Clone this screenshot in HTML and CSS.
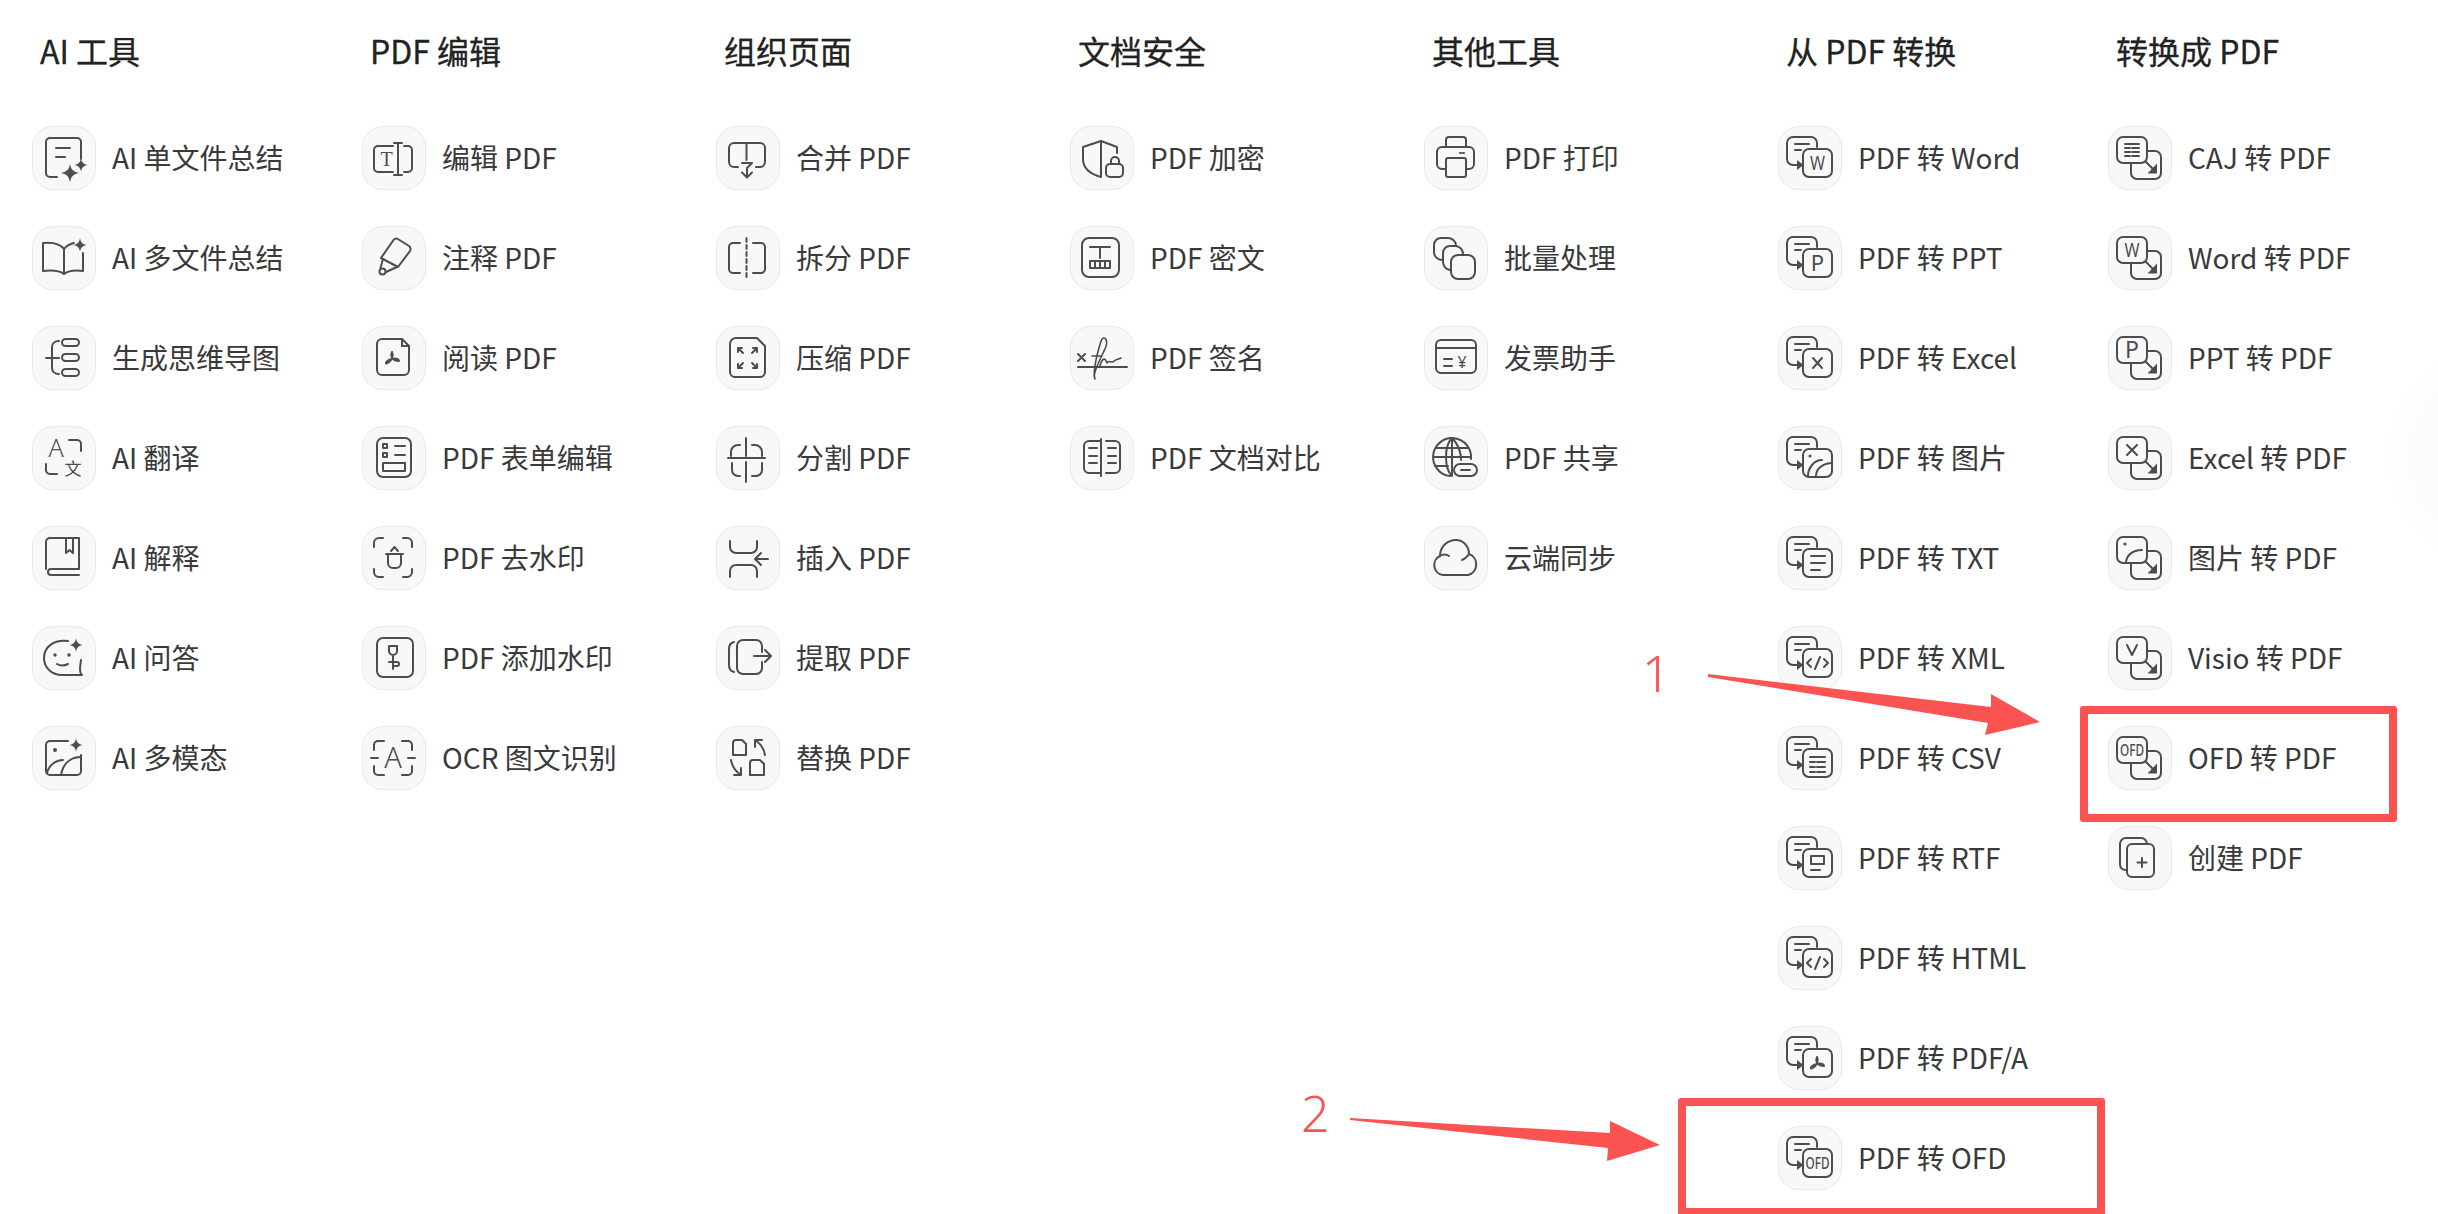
FILE: index.html
```html
<!DOCTYPE html>
<html lang="zh-CN">
<head>
    <meta charset="UTF-8">
    <title>PDF 工具</title>
    <link rel="stylesheet" href="styles.css">
</head>
<body>

<!-- 共用图标部件 -->
<svg class="defs" width="0" height="0">
    <defs>
        <g id="spark-lg"><path class="solid" d="M38 38Q39 46 47 47Q39 48 38 56Q37 48 29 47Q37 46 38 38Z"/></g>
        <g id="spark-sm"><path class="solid" d="M0-6.5Q.8-.8 6.5 0Q.8.8 0 6.5Q-.8.8-6.5 0Q-.8-.8 0-6.5Z"/></g>
        <g id="acrobat"><path d="M0 0Q-1.500-3 0-6Q1.500-3 0 0M0 0Q-2 5-6 5.500Q-6.500 3.500-2 1.500M0 0Q3 3 7 3Q6.500 .5 2 .5"/></g>
        <g id="from-pdf">
            <path d="M39 21V17a6 6 0 0 0-6-6H15a6 6 0 0 0-6 6V33a6 6 0 0 0 6 6H19"/>
            <path d="M17 18H31M17 24H23"/>
            <path class="solid" d="M19 34L25.500 39L19 44Z"/>
            <rect x="25" y="23" width="29" height="28" rx="6"/>
        </g>
        <g id="to-pdf">
            <rect x="9" y="11" width="30" height="26" rx="6"/>
            <path d="M39 25H47a6 6 0 0 1 6 6V47a6 6 0 0 1-6 6H29a6 6 0 0 1-6-6V37"/>
            <path d="M38 36L46 44"/>
            <path class="solid" d="M49 37.500V47.500H39.500Z"/>
        </g>
    </defs>
</svg>

<div class="page">

    <section class="col">
        <h2>AI 工具</h2>
        <ul class="tool-list">
            <li class="tool"><span class="tool-icon"><svg viewBox="0 0 64 64"><path d="M49 33V16a4 4 0 0 0-4-4H18a4 4 0 0 0-4 4V47a4 4 0 0 0 4 4H25"/><path d="M24 22H38M24 31H33"/><use href="#spark-lg"/><use href="#spark-sm" x="49" y="39"/></svg></span>AI 单文件总结</li>
            <li class="tool"><span class="tool-icon"><svg viewBox="0 0 64 64"><path d="M32 23C28 18 20 16 11 17V45C20 44 28 45 32 48C36 45 44 44 51 45V27"/><path d="M32 23V48M32 23C35 19 38 18 42 17"/><use href="#spark-sm" x="48" y="19"/></svg></span>AI 多文件总结</li>
            <li class="tool"><span class="tool-icon"><svg viewBox="0 0 64 64"><path d="M27 15C22 15 20 18 20 21V42C20 45 22 48 27 48M14 32H27"/><rect x="30" y="13" width="17" height="7" rx="3.500"/><rect x="30" y="28" width="17" height="7" rx="3.500"/><rect x="30" y="43" width="17" height="7" rx="3.500"/></svg></span>生成思维导图</li>
            <li class="tool"><span class="tool-icon"><svg viewBox="0 0 64 64"><text class="glyph thin" x="24" y="31" font-size="25" text-anchor="middle">A</text><text class="glyph cjk" x="41" y="49" font-size="17" text-anchor="middle">文</text><path d="M37 14H45a4 4 0 0 1 4 4V25M14 38V44a4 4 0 0 0 4 4H25"/></svg></span>AI 翻译</li>
            <li class="tool"><span class="tool-icon"><svg viewBox="0 0 64 64"><path d="M14 43V16a4 4 0 0 1 4-4H47V43H19a3 3 0 0 0 0 6H47"/><path d="M34 12V27L37.500 24L41 27V12"/></svg></span>AI 解释</li>
            <li class="tool"><span class="tool-icon"><svg viewBox="0 0 64 64"><path d="M36 15C22 13 12 21 12 32C12 42 20 49 30 49H50C47 46 48 42 49 34"/><circle class="solid" cx="23" cy="29" r="1.700"/><circle class="solid" cx="37" cy="29" r="1.700"/><path d="M25 38Q30 41 36 38"/><use href="#spark-sm" x="44" y="19"/></svg></span>AI 问答</li>
            <li class="tool"><span class="tool-icon"><svg viewBox="0 0 64 64"><path d="M36 15H18a4 4 0 0 0-4 4V45a4 4 0 0 0 4 4H45a4 4 0 0 0 4-4V29"/><circle class="solid" cx="23" cy="24" r="2"/><path d="M15 47C17 39 24 34 31 34M49 31C38 31 31 38 29 49"/><use href="#spark-sm" x="44" y="19"/></svg></span>AI 多模态</li>
        </ul>
    </section>

    <section class="col">
        <h2>PDF 编辑</h2>
        <ul class="tool-list">
            <li class="tool"><span class="tool-icon"><svg viewBox="0 0 64 64"><path d="M31 20H16a4 4 0 0 0-4 4V42a4 4 0 0 0 4 4H31M42 20H46a4 4 0 0 1 4 4V42a4 4 0 0 1-4 4H42M32 17H40M36 17V49M32 49H40"/><text class="glyph serif" x="24.500" y="40" font-size="20" text-anchor="middle">T</text></svg></span>编辑 PDF</li>
            <li class="tool"><span class="tool-icon"><svg viewBox="0 0 64 64"><path d="M35 12.500L47 20Q49.500 22 48 25L36 41L19 32L31.500 14Q33 12 35 12.500Z"/><path d="M21 33L18.500 42M35 41L24 46"/><circle cx="20.500" cy="45.500" r="3"/></svg></span>注释 PDF</li>
            <li class="tool"><span class="tool-icon"><svg viewBox="0 0 64 64"><path d="M40 13H20a5 5 0 0 0-5 5V44a5 5 0 0 0 5 5H42a5 5 0 0 0 5-5V20Z"/><path d="M40 13V20H47"/><use href="#acrobat" x="30" y="32"/></svg></span>阅读 PDF</li>
            <li class="tool"><span class="tool-icon"><svg viewBox="0 0 64 64"><rect x="15" y="12" width="34" height="39" rx="6"/><rect x="21" y="18" width="4" height="4"/><rect x="21" y="27" width="4" height="4"/><path d="M33 20H43M33 29H43"/><rect x="21" y="37" width="22" height="8"/></svg></span>PDF 表单编辑</li>
            <li class="tool"><span class="tool-icon"><svg viewBox="0 0 64 64"><path d="M12 21V17a5 5 0 0 1 5-5H21M41 12H45a5 5 0 0 1 5 5V21M50 43V46a5 5 0 0 1-5 5H41M21 51H17a5 5 0 0 1-5-5V43"/><path d="M24 28H41M26 28V37a5 5 0 0 0 5 5H34a5 5 0 0 0 5-5V28M29 25L32.500 21L36 25"/></svg></span>PDF 去水印</li>
            <li class="tool"><span class="tool-icon"><svg viewBox="0 0 64 64"><rect x="15" y="12" width="36" height="39" rx="6"/><path d="M27 20H35V25a4 4 0 0 1-8 0ZM31 29V43M31 36H35a2 2 0 0 1 0 4H31M31 36H27"/></svg></span>PDF 添加水印</li>
            <li class="tool"><span class="tool-icon"><svg viewBox="0 0 64 64"><path d="M12 24V19a4 4 0 0 1 4-4H22M40 15H46a4 4 0 0 1 4 4V24M50 40V45a4 4 0 0 1-4 4H40M22 49H16a4 4 0 0 1-4-4V40"/><path d="M9 32H16M46 32H53"/><text class="glyph thin" x="31" y="42" font-size="29" text-anchor="middle">A</text></svg></span>OCR 图文识别</li>
        </ul>
    </section>

    <section class="col">
        <h2>组织页面</h2>
        <ul class="tool-list">
            <li class="tool"><span class="tool-icon"><svg viewBox="0 0 64 64"><path d="M22 41H18a5 5 0 0 1-5-5V22a5 5 0 0 1 5-5H44a5 5 0 0 1 5 5V36a5 5 0 0 1-5 5H40M30.500 17V34M26 37H36L31 42V51M26 46.500L31 51.500L36 46.500"/></svg></span>合并 PDF</li>
            <li class="tool"><span class="tool-icon"><svg viewBox="0 0 64 64"><path d="M24 17H17a4 4 0 0 0-4 4V43a4 4 0 0 0 4 4H24M37 17H45a4 4 0 0 1 4 4V43a4 4 0 0 1-4 4H37"/><path d="M30.500 12V52" stroke-dasharray="4 3"/></svg></span>拆分 PDF</li>
            <li class="tool"><span class="tool-icon"><svg viewBox="0 0 64 64"><path d="M20 12H41L49 20V46a5 5 0 0 1-5 5H19a5 5 0 0 1-5-5V18a6 6 0 0 1 6-6Z"/><path d="M22 22H26M22 22V26M22 22L27 27M41 22H37M41 22V26M41 22L36 27M22 42H26M22 42V38M22 42L27 37M41 42H37M41 42V38M41 42L36 37"/></svg></span>压缩 PDF</li>
            <li class="tool"><span class="tool-icon"><svg viewBox="0 0 64 64"><path d="M12 32H49M30 12V30M30 36V56M15 30V26a7 7 0 0 1 7-7H24M36 19H39a7 7 0 0 1 7 7V30M16 37V44a6 6 0 0 0 6 6H24M36 50H40a6 6 0 0 0 6-6V37"/></svg></span>分割 PDF</li>
            <li class="tool"><span class="tool-icon"><svg viewBox="0 0 64 64"><path d="M14 15V21a6 6 0 0 0 6 6H35a6 6 0 0 0 6-6V15M14 51V45a6 6 0 0 1 6-6H35a6 6 0 0 1 6 6V51M52 33H39M45 27L39 33L45 39"/></svg></span>插入 PDF</li>
            <li class="tool"><span class="tool-icon"><svg viewBox="0 0 64 64"><path d="M46 26V20a6 6 0 0 0-6-6H27a6 6 0 0 0-6 6V42a6 6 0 0 0 6 6H40a6 6 0 0 0 6-6V36M18 16Q13 17 13 23V39Q13 45 18 46M38 30H55M49 24L55 30L49 36"/></svg></span>提取 PDF</li>
            <li class="tool"><span class="tool-icon"><svg viewBox="0 0 64 64"><path d="M20 14H26L30 18V29H17V17a3 3 0 0 1 3-3ZM37 34H44L48 38V49H34V37a3 3 0 0 1 3-3ZM49 29C48 23 45 18 39 14M39 14V21M39 14H46M15 34C16 40 19 45 25 49M25 49V42M25 49H18"/></svg></span>替换 PDF</li>
        </ul>
    </section>

    <section class="col">
        <h2>文档安全</h2>
        <ul class="tool-list">
            <li class="tool"><span class="tool-icon"><svg viewBox="0 0 64 64"><path d="M47 27V21L31 15L13 21V33C13 42 20 48 31 51M31 15V51"/><rect x="36" y="38" width="17" height="13" rx="4"/><path d="M41 38V35a4 4 0 0 1 8 0V38"/></svg></span>PDF 加密</li>
            <li class="tool"><span class="tool-icon"><svg viewBox="0 0 64 64"><rect x="12" y="12" width="37" height="39" rx="7"/><path d="M20 21H40M30 21V32"/><rect x="20" y="35" width="20" height="7"/><path d="M25 35V42M30 35V42M35 35V42"/></svg></span>PDF 密文</li>
            <li class="tool"><span class="tool-icon"><svg viewBox="0 0 64 64"><path d="M8 28L15 35M15 28L8 35M8 41H57"/><path class="fine" d="M25 53C22 45 28 25 31 15C34 8 40 14 34 25C30 33 25 45 24 50M22 30H32M30 40C32 32 35 31 37 37C39 33 42 38 44 35C46 33 47 34 51 32"/></svg></span>PDF 签名</li>
            <li class="tool"><span class="tool-icon"><svg viewBox="0 0 64 64"><path d="M30 15H19a5 5 0 0 0-5 5V42a5 5 0 0 0 5 5H30M31 13V50M36 15H45a5 5 0 0 1 5 5V42a5 5 0 0 1-5 5H36M19 22H27M19 30H27M19 37H27M38 22H46M38 30H46M38 37H46"/></svg></span>PDF 文档对比</li>
        </ul>
    </section>

    <section class="col">
        <h2>其他工具</h2>
        <ul class="tool-list">
            <li class="tool"><span class="tool-icon"><svg viewBox="0 0 64 64"><path d="M22 21V14a3 3 0 0 1 3-3H39a3 3 0 0 1 3 3V21M22 43H18a5 5 0 0 1-5-5V26a5 5 0 0 1 5-5H45a5 5 0 0 1 5 5V38a5 5 0 0 1-5 5H42M36 27H37M39 27H40"/><rect x="22" y="32" width="20" height="19" rx="2"/></svg></span>PDF 打印</li>
            <li class="tool"><span class="tool-icon"><svg viewBox="0 0 64 64"><rect x="27" y="29" width="24" height="24" rx="7"/><path d="M26 44a8 8 0 0 1-7-8V27a7 7 0 0 1 7-7H32a8 8 0 0 1 7 8M18 34a8 8 0 0 1-8-8V19a7 7 0 0 1 7-7H24a8 8 0 0 1 8 7"/></svg></span>批量处理</li>
            <li class="tool"><span class="tool-icon"><svg viewBox="0 0 64 64"><rect x="12" y="14" width="40" height="33" rx="5"/><path d="M12 22H52M20 33H28M20 40H28"/><text class="glyph" x="38" y="42" font-size="16" text-anchor="middle">¥</text></svg></span>发票助手</li>
            <li class="tool"><span class="tool-icon"><svg viewBox="0 0 64 64"><path d="M47 33A19 19 0 1 0 26 50M28 12C20 20 20 42 28 50M28 12C36 20 37 28 37 34M28 12V50M9 31H47M12 22H44M11 40H24"/><rect x="30" y="38" width="23" height="12" rx="6"/><path d="M37 44H46"/></svg></span>PDF 共享</li>
            <li class="tool"><span class="tool-icon"><svg viewBox="0 0 64 64"><path d="M19 49a10 10 0 0 1-3-19C16 20 24 14 32 14C40 14 45 21 45 28a11 11 0 0 1-1 21ZM16 30C19 28 22 28 25 30M45 28C43 31 41 33 38 34"/></svg></span>云端同步</li>
        </ul>
    </section>

    <section class="col">
        <h2>从 PDF 转换</h2>
        <ul class="tool-list">
            <li class="tool"><span class="tool-icon"><svg viewBox="0 0 64 64"><use href="#from-pdf"/><text class="glyph" x="39.500" y="44" font-size="19" text-anchor="middle" textLength="15" lengthAdjust="spacingAndGlyphs">W</text></svg></span>PDF 转 Word</li>
            <li class="tool"><span class="tool-icon"><svg viewBox="0 0 64 64"><use href="#from-pdf"/><text class="glyph" x="39.500" y="45" font-size="22" text-anchor="middle">P</text></svg></span>PDF 转 PPT</li>
            <li class="tool"><span class="tool-icon"><svg viewBox="0 0 64 64"><use href="#from-pdf"/><path d="M35 32L44 42M44 32L35 42"/></svg></span>PDF 转 Excel</li>
            <li class="tool"><span class="tool-icon"><svg viewBox="0 0 64 64"><use href="#from-pdf"/><circle class="solid" cx="32" cy="30" r="1.500"/><path d="M30 50C30 42 36 34 44 34M38 50C38 43 44 38 53 37"/></svg></span>PDF 转 图片</li>
            <li class="tool"><span class="tool-icon"><svg viewBox="0 0 64 64"><use href="#from-pdf"/><path d="M33 30H47M33 37H47M33 44H42"/></svg></span>PDF 转 TXT</li>
            <li class="tool"><span class="tool-icon"><svg viewBox="0 0 64 64"><use href="#from-pdf"/><path d="M33 33L29 37L33 41M46 33L50 37L46 41M42 31L37 43"/></svg></span>PDF 转 XML</li>
            <li class="tool"><span class="tool-icon"><svg viewBox="0 0 64 64"><use href="#from-pdf"/><path d="M32 31H47M32 36H37M39 36H47M32 41H37M39 41H47M32 46H37M39 46H47"/></svg></span>PDF 转 CSV</li>
            <li class="tool"><span class="tool-icon"><svg viewBox="0 0 64 64"><use href="#from-pdf"/><rect x="33" y="30" width="13" height="8"/><path d="M33 44H42"/></svg></span>PDF 转 RTF</li>
            <li class="tool"><span class="tool-icon"><svg viewBox="0 0 64 64"><use href="#from-pdf"/><path d="M33 33L29 37L33 41M46 33L50 37L46 41M42 31L37 43"/></svg></span>PDF 转 HTML</li>
            <li class="tool"><span class="tool-icon"><svg viewBox="0 0 64 64"><use href="#from-pdf"/><use href="#acrobat" x="39" y="37"/></svg></span>PDF 转 PDF/A</li>
            <li class="tool"><span class="tool-icon"><svg viewBox="0 0 64 64"><use href="#from-pdf"/><text class="glyph condensed" x="39.500" y="43" font-size="17" text-anchor="middle" textLength="24" lengthAdjust="spacingAndGlyphs">OFD</text></svg></span>PDF 转 OFD</li>
        </ul>
    </section>

    <section class="col">
        <h2>转换成 PDF</h2>
        <ul class="tool-list">
            <li class="tool"><span class="tool-icon"><svg viewBox="0 0 64 64"><use href="#to-pdf"/><path d="M17 18H31M17 22H22M24 22H31M17 26H22M24 26H31M17 30H22M24 30H31"/></svg></span>CAJ 转 PDF</li>
            <li class="tool"><span class="tool-icon"><svg viewBox="0 0 64 64"><use href="#to-pdf"/><text class="glyph" x="24" y="31" font-size="19" text-anchor="middle" textLength="15" lengthAdjust="spacingAndGlyphs">W</text></svg></span>Word 转 PDF</li>
            <li class="tool"><span class="tool-icon"><svg viewBox="0 0 64 64"><use href="#to-pdf"/><text class="glyph" x="24" y="32" font-size="23" text-anchor="middle">P</text></svg></span>PPT 转 PDF</li>
            <li class="tool"><span class="tool-icon"><svg viewBox="0 0 64 64"><use href="#to-pdf"/><path d="M19 19L29 29M29 19L19 29"/></svg></span>Excel 转 PDF</li>
            <li class="tool"><span class="tool-icon"><svg viewBox="0 0 64 64"><use href="#to-pdf"/><circle class="solid" cx="17" cy="18" r="1.600"/><path d="M18 37C18 30 24 24 34 24"/></svg></span>图片 转 PDF</li>
            <li class="tool"><span class="tool-icon"><svg viewBox="0 0 64 64"><use href="#to-pdf"/><path d="M19 19L24 29L29 19"/></svg></span>Visio 转 PDF</li>
            <li class="tool"><span class="tool-icon"><svg viewBox="0 0 64 64"><use href="#to-pdf"/><text class="glyph condensed" x="24" y="30" font-size="17" text-anchor="middle" textLength="24" lengthAdjust="spacingAndGlyphs">OFD</text></svg></span>OFD 转 PDF</li>
            <li class="tool"><span class="tool-icon"><svg viewBox="0 0 64 64"><rect x="19" y="18" width="27" height="33" rx="5"/><path d="M18 44Q12 44 12 38V18a6 6 0 0 1 6-6H33a6 6 0 0 1 6 6M34 32V41M29.500 36.500H38.500"/></svg></span>创建 PDF</li>
        </ul>
    </section>

    <!-- 截图上的标注 -->
    <div class="mark-box mark-box-one"></div>
    <div class="mark-box mark-box-two"></div>
    <span class="mark-num mark-num-one">1</span>
    <span class="mark-num mark-num-two">2</span>
    <svg class="mark-arrows" viewBox="0 0 2438 1214">
        <polygon points="1708,674 1991,707 1991,694 2040,722 1985,735 1988,723 1708,677"/>
        <polygon points="1350,1118 1610,1133 1610,1121 1660,1145 1607,1161 1608,1148 1350,1120"/>
    </svg>

    <div class="stamp">1760525950</div>
    <div class="edge-glow"></div>
</div>

</body>
</html>
```

FILE: styles.css
```css
* {
    box-sizing: border-box;
}

html, body {
    margin: 0;
    padding: 0;
    background-color: #fff;
}

body {
    font-family: "Noto Sans CJK SC", "Noto Sans", sans-serif;
    color: #333;
}

.defs {
    position: absolute;
}

.page {
    position: relative;
    display: flex;
    width: 2438px;
    height: 1214px;
    padding: 30px 0 0 32px;
    overflow: hidden;
}

.col {
    flex: 0 0 354px;
}

.col:first-child,
.col:nth-child(6) {
    flex-basis: 330px;
}

.col h2 {
    margin: 0 0 56px 8px;
    font-size: 32px;
    line-height: 40px;
    font-weight: 400;
    color: #222;
    -webkit-text-stroke: 0.3px #222;
}

.tool-list {
    display: flex;
    flex-direction: column;
    gap: 36px;
    margin: 0;
    padding: 0;
    list-style: none;
}

.tool {
    display: flex;
    align-items: flex-start;
    gap: 16px;
    height: 64px;
    font-size: 28px;
    line-height: 63px;
    white-space: nowrap;
    color: #3a3a3a;
}

.tool-icon {
    flex: 0 0 64px;
    width: 64px;
    height: 64px;
    border-radius: 21px;
    background-color: #f8f8f8;
    box-shadow: inset 0 0 0 1px #e9e9e9;
}

.tool-icon svg {
    display: block;
    width: 64px;
    height: 64px;
    fill: none;
    stroke: #4d4d4d;
    stroke-width: 2;
    stroke-linecap: round;
    stroke-linejoin: round;
}

/* use 里的克隆元素匹配不到后代选择器，所以这里不带 .tool-icon */
.solid {
    fill: #4d4d4d;
    stroke: none;
}

.fine {
    stroke-width: 1.6;
}

.glyph {
    fill: #4d4d4d;
    stroke: none;
    font-family: "Noto Sans", sans-serif;
    font-weight: 400;
}

.cjk {
    font-family: "Noto Sans CJK SC", sans-serif;
}

.serif {
    font-family: "Liberation Serif", serif;
}

.thin {
    font-weight: 300;
}

.condensed {
    font-weight: 500;
}

/* 红色标注 */
.mark-box {
    position: absolute;
    border: 8px solid #fb5252;
    border-radius: 3px;
}

.mark-box-one {
    left: 2080px;
    top: 706px;
    width: 317px;
    height: 116px;
}

.mark-box-two {
    left: 1678px;
    top: 1098px;
    width: 427px;
    height: 118px;
}

.mark-num {
    position: absolute;
    font-family: "Noto Sans", sans-serif;
    font-size: 50px;
    line-height: 50px;
    font-weight: 300;
    color: #fb5252;
}

.mark-num-one {
    left: 1642px;
    top: 648px;
}

.mark-num-two {
    left: 1301px;
    top: 1088px;
}

.mark-arrows {
    position: absolute;
    left: 0;
    top: 0;
    width: 2438px;
    height: 1214px;
    fill: #fb5252;
    pointer-events: none;
}

.stamp {
    position: absolute;
    z-index: -1;
    left: 1129px;
    top: 320px;
    width: 179px;
    height: 40px;
    padding-left: 13px;
    background-color: #fffffa;
    font-family: "Liberation Serif", serif;
    font-size: 27px;
    line-height: 40px;
    color: #fbfbf3;
}

.edge-glow {
    position: absolute;
    left: 2380px;
    top: 340px;
    width: 58px;
    height: 240px;
    background: radial-gradient(circle at 120px 117px, #f6f6f6 0, #fdfdfd 95px, #fff 120px);
    pointer-events: none;
}
```
